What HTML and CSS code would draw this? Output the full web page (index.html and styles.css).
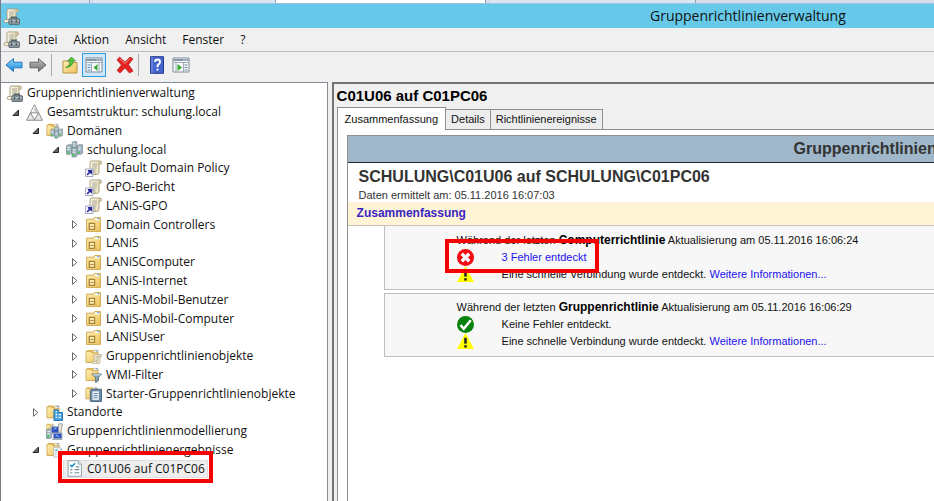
FILE: index.html
```
<!DOCTYPE html>
<html lang="de">
<head>
<meta charset="utf-8">
<title>Gruppenrichtlinienverwaltung</title>
<link rel="stylesheet" href="styles.css">
</head>
<body>
<svg class="defs" aria-hidden="true">
  <defs>
    <linearGradient id="g-blue" x1="0" y1="0" x2="0" y2="1"><stop offset="0" stop-color="#8fdcff"/><stop offset="1" stop-color="#1787d8"/></linearGradient>
    <linearGradient id="g-grey" x1="0" y1="0" x2="0" y2="1"><stop offset="0" stop-color="#c2c2c2"/><stop offset="1" stop-color="#6c6c6c"/></linearGradient>
    <linearGradient id="g-gold" x1="0" y1="0" x2="1" y2="1"><stop offset="0" stop-color="#fff0b4"/><stop offset="1" stop-color="#edc159"/></linearGradient>
    <linearGradient id="g-paper" x1="0" y1="0" x2="1" y2="0"><stop offset="0" stop-color="#fffdf0"/><stop offset="1" stop-color="#e6dcb8"/></linearGradient>
    <symbol id="paper" viewBox="0 0 16 16">
      <path d="M5 1h9q1.500 0 1.500 1.700T14 4.300h-1V12q0 2.500-2 2.500H2.500Q1 14.500 1 13t2-1.500h1V3q0-2 1-2z" fill="url(#g-paper)" stroke="#a79b78" stroke-width=".9"/>
      <path d="M13 4.300V2.500q0-1 1-1M3 11.700h6q-.8 1.500.8 2.500" fill="none" stroke="#a79b78" stroke-width=".8"/>
      <path d="M6 4h5M6 6h5M6 8h4.500M6 10h4" stroke="#999586" stroke-width=".8"/>
    </symbol>
    <symbol id="console" viewBox="0 0 16 16">
      <use href="#paper" width="15" height="15"/>
      <path d="M8 10V8.700h4.500V10" fill="none" stroke="#53616b" stroke-width="1.200"/>
      <rect x="5.500" y="10" width="10" height="5.500" rx=".7" fill="#86939b" stroke="#58646b" stroke-width=".8"/>
      <path d="M6 12h9" stroke="#c4ced4"/><path d="M8 11.500v2M12.500 11.500v2" stroke="#36434b" stroke-width="1.200"/>
    </symbol>
    <symbol id="folder" viewBox="0 0 16 16">
      <path d="M2 1.500h6L9.500 3H14v12H2z" fill="#e5b956"/>
      <path d="M9 2h5v3H9z" fill="#fff" stroke="#b59a55" stroke-width=".6"/><path d="M11.500 2.700h2" stroke="#3a91d8"/>
      <path d="M1 3h5l2 1.500h6V15H1z" fill="url(#g-gold)" stroke="#c59e49" stroke-width=".8"/>
    </symbol>
    <symbol id="ou" viewBox="0 0 16 16">
      <path d="M1.500 3h6L9 1.500h5.500v13h-13z" fill="url(#g-gold)" stroke="#d0a54c" stroke-width=".9"/>
      <path d="M9.500 2h4v2h-4z" fill="#fff"/><path d="M11.500 2.500h2" stroke="#3f9ee0"/>
      <path d="M4 7h5v5.500H4z" fill="#fff1b4" stroke="#a5823a" stroke-width="1.200"/><path d="M5 9.800h3" stroke="#a5823a"/>
    </symbol>
    <symbol id="server" viewBox="0 0 6 10">
      <path d="M.5 1.500L2 .5h3.500v8L4 9.500H.5z" fill="#a3b5bf" stroke="#637b86" stroke-width=".6"/>
      <path d="M1.200 3h2.600M1.200 5h2.600" stroke="#eef6fa" stroke-width=".8"/><path d="M1.200 7.700h1.800" stroke="#39cb3f" stroke-width="1.800"/>
    </symbol>
    <symbol id="servers" viewBox="0 0 16 16">
      <use href="#server" x="5" y="0" width="6" height="9"/><use href="#server" x="0" y="2" width="6" height="12"/><use href="#server" x="10" y="2" width="6" height="12"/><use href="#server" x="5" y="5" width="6" height="11"/>
    </symbol>
    <symbol id="domains" viewBox="0 0 16 16"><use href="#folder" width="13" height="14"/><use href="#servers" x="4" y="4" width="12" height="12"/></symbol>
    <symbol id="forest" viewBox="0 0 16 16">
      <path d="M8 .7L15.500 15.300H.5z" fill="#e6e6e6" stroke="#858585" stroke-width=".9"/>
      <path d="M8 1.500L11.500 8.500h-7z" fill="#f4f4f4"/><path d="M8 1.500L11.500 8.500 8 7z" fill="#c4c4c4"/>
      <path d="M4.300 8.300h7.400L8 15z" fill="#fff" stroke="#777" stroke-width=".8"/>
    </symbol>
    <symbol id="link" viewBox="0 0 16 16">
      <use href="#paper" x="1" width="15" height="15"/>
      <path d="M.5 8.500h7v7h-7z" fill="#fff" stroke="#9297b8" stroke-width=".8"/>
      <path d="M2 14l3.200-3.200M2.700 10.200H6v3.300" fill="none" stroke="#29299b" stroke-width="1.500"/>
    </symbol>
    <symbol id="gpos" viewBox="0 0 16 16"><use href="#folder" width="14" height="15"/><use href="#paper" x="6" y="5" width="10" height="11"/></symbol>
    <symbol id="wmi" viewBox="0 0 16 16"><use href="#folder" width="14" height="15"/><path d="M6.500 7.500h9L12.500 11v3L10 15.500V11z" fill="#8fa5b5" stroke="#4e6576" stroke-width=".8"/><path d="M7.500 8.300h7" stroke="#deebf5"/></symbol>
    <symbol id="starter" viewBox="0 0 16 16"><use href="#folder" width="13" height="15"/><path d="M6 4h9.500v11.500H5V5z" fill="#6e8aa5" stroke="#405d7b" stroke-width=".8"/><path d="M7 6h6v8H7z" fill="#f2f7fc"/><path d="M8 8h4M8 10h4M8 12h4" stroke="#537cae" stroke-width=".9"/></symbol>
    <symbol id="sites" viewBox="0 0 16 16"><use href="#folder" width="14" height="14"/><path d="M7.500 5.500h4V8h4v7.500h-8z" fill="#46a4e2" stroke="#1763a5" stroke-width=".8"/><path d="M9 7.500h1.500M9 10h1.500M12 10h2M9 12.500h1.500M12 12.500h2" stroke="#fff" stroke-width="1.200"/></symbol>
    <symbol id="model" viewBox="0 0 16 16">
      <use href="#folder" y="0" width="8" height="8"/><use href="#server" x="0" y="5" width="6" height="10"/><path d="M5 3.500h7v6H5zM7 9.500h8v5H7z" fill="#304fc0" stroke="#9aa9c4"/><path d="M7 6l3-1.500M9 11l3 2" stroke="#8dc5ff"/><path d="M12 .8h3.500L14 9l-2-1z" fill="url(#g-paper)" stroke="#86898a" stroke-width=".7"/><path d="M6 15.300h9" stroke="#829099"/>
    </symbol>
    <symbol id="report" viewBox="0 0 16 16">
      <path d="M2 .7h9.500L14.500 4v11.300H2z" fill="#fff" stroke="#8d9da8" stroke-width=".9"/><path d="M11.500 1v3h3" fill="#d8e1e7" stroke="#8d9da8" stroke-width=".7"/>
      <path d="M4 4.500l1.500 1.700L8.500 3" fill="none" stroke="#178fd1" stroke-width="1.500"/><path d="M4 9h2M4 12h2M8 9h4.500M8 12h4.500M9.500 6.500h3" stroke="#71899a" stroke-width="1.100"/>
    </symbol>
    <symbol id="results" viewBox="0 0 16 16"><use href="#folder" width="14" height="15"/><use href="#report" x="6" y="5" width="10" height="11"/></symbol>
    <symbol id="open" viewBox="0 0 9 9"><path d="M7.500 2v5.500H2z" fill="#666" stroke="#262626"/></symbol>
    <symbol id="closed" viewBox="0 0 9 9"><path d="M2.500.7v7.600L6.800 4.500z" fill="#fff" stroke="#666"/></symbol>
    <symbol id="warn" viewBox="0 0 16 16"><path d="M8 0L16 15H0z" fill="#ff0"/><path d="M8 4.500v5.500" stroke="#222" stroke-width="2.400"/><path d="M8 11.500v2.200" stroke="#222" stroke-width="2.400"/></symbol>
    <symbol id="error" viewBox="0 0 16 16"><circle cx="8" cy="8" r="8" fill="#f10b13"/><path d="M4.500 4.500l7 7M11.500 4.500l-7 7" stroke="#fff" stroke-width="3.200"/></symbol>
    <symbol id="ok" viewBox="0 0 16 16"><circle cx="8" cy="8" r="8" fill="#08820b"/><path d="M3.300 8.500l3 3.500 6.700-8" fill="none" stroke="#fff" stroke-width="2.400"/></symbol>
  </defs>
</svg>

<div class="backdrop"><span></span><span></span><span></span><span></span></div>
<header class="titlebar">
  <svg class="app-icon"><use href="#console"/></svg>
  <h1>Gruppenrichtlinienverwaltung</h1>
</header>
<nav class="menubar">
  <svg class="app-icon"><use href="#console"/></svg>
  <button>Datei</button><button>Aktion</button><button>Ansicht</button><button>Fenster</button><button>?</button>
</nav>
<div class="toolbar" role="toolbar">
  <button aria-label="Zurück"><svg viewBox="0 0 18 18"><path d="M1 9l7.500-6.500v3.700H17v5.600H8.500v3.700z" fill="url(#g-blue)" stroke="#2878b5"/></svg></button>
  <button aria-label="Vorwärts"><svg viewBox="0 0 18 18"><path d="M17 9L9.500 2.500v3.700H1v5.600h8.500v3.700z" fill="url(#g-grey)" stroke="#666"/></svg></button>
  <i></i>
  <button aria-label="Eine Ebene nach oben"><svg viewBox="0 0 18 18"><path d="M2 5h5l1.500 1.500H16V17H2z" fill="url(#g-gold)" stroke="#b79646"/><path d="M4.500 11.500Q9 10 9 5H6.500l4-4 4 4H12q0 6-7.500 6.500z" fill="#54c938" stroke="#31872b" stroke-width=".7"/></svg></button>
  <button class="pressed" aria-label="Konsolenstruktur anzeigen"><svg viewBox="0 0 18 18"><path d="M1 2h16v14H1z" fill="#f7f9fb" stroke="#7d8b98"/><path d="M1.500 3h15v2h-15z" fill="#8697a6"/><path d="M11.500 4h1M14 4h1" stroke="#fff"/><path d="M1.500 6.500h15M6.500 7v9M14 7v9" stroke="#9caab5"/><path d="M2.500 9h3M2.500 11.500h3M2.500 14h3" stroke="#4788c5" stroke-width="1.200"/><path d="M12.500 8v7l-4-3.500z" fill="#35aa34"/></svg></button>
  <button aria-label="Löschen"><svg viewBox="0 0 18 18"><path d="M3.500 1L9 6l5-5 3 2-4.500 5.500L17 15l-3.500 2L9 12l-5 5-3-2.500L5.500 9 1 4z" fill="#e52422" stroke="#ac1517" stroke-width=".7"/><path d="M3.500 2.500L9 7.500l5-5" fill="none" stroke="#ff8880"/></svg></button>
  <i></i>
  <button aria-label="Hilfe"><svg viewBox="0 0 18 18"><path d="M2.500.7h13v16.600h-13z" fill="#4664cd" stroke="#233b91"/><path d="M4 1v16" stroke="#829af0"/><path d="M7 6q0-2.500 2.500-2.500T12 6q0 1.300-1.300 2.100T9.500 10.500v.8M9.500 12.800v1.800" fill="none" stroke="#fff" stroke-width="1.900"/></svg></button>
  <button aria-label="Aktionsbereich anzeigen"><svg viewBox="0 0 18 18"><path d="M1 2h16v14H1z" fill="#f7f9fb" stroke="#7d8b98"/><path d="M1.500 3h15v2h-15z" fill="#8697a6"/><path d="M11.500 4h1M14 4h1" stroke="#fff"/><path d="M1.500 6.500h15M4 7v9M11.500 7v9" stroke="#9caab5"/><path d="M12.500 9h3M12.500 11.500h3M12.500 14h3" stroke="#647d95" stroke-width="1.200"/><path d="M5.500 8v7l4.500-3.500z" fill="#35aa34"/></svg></button>
</div>

<main class="workspace">
  <aside class="tree-pane">
    <ul class="tree">
      <li class="root"><svg><use href="#console"/></svg><span>Gruppenrichtlinienverwaltung</span></li>
      <li class="l1"><button aria-label="Zuklappen"><svg><use href="#open"/></svg></button><svg><use href="#forest"/></svg><span>Gesamtstruktur: schulung.local</span></li>
      <li class="l2"><button aria-label="Zuklappen"><svg><use href="#open"/></svg></button><svg><use href="#domains"/></svg><span>Domänen</span></li>
      <li class="l3"><button aria-label="Zuklappen"><svg><use href="#open"/></svg></button><svg><use href="#servers"/></svg><span>schulung.local</span></li>
      <li class="l4 leaf"><svg><use href="#link"/></svg><span>Default Domain Policy</span></li>
      <li class="l4 leaf"><svg><use href="#link"/></svg><span>GPO-Bericht</span></li>
      <li class="l4 leaf"><svg><use href="#link"/></svg><span>LANiS-GPO</span></li>
      <li class="l4"><button aria-label="Aufklappen"><svg><use href="#closed"/></svg></button><svg><use href="#ou"/></svg><span>Domain Controllers</span></li>
      <li class="l4"><button aria-label="Aufklappen"><svg><use href="#closed"/></svg></button><svg><use href="#ou"/></svg><span>LANiS</span></li>
      <li class="l4"><button aria-label="Aufklappen"><svg><use href="#closed"/></svg></button><svg><use href="#ou"/></svg><span>LANiSComputer</span></li>
      <li class="l4"><button aria-label="Aufklappen"><svg><use href="#closed"/></svg></button><svg><use href="#ou"/></svg><span>LANiS-Internet</span></li>
      <li class="l4"><button aria-label="Aufklappen"><svg><use href="#closed"/></svg></button><svg><use href="#ou"/></svg><span>LANiS-Mobil-Benutzer</span></li>
      <li class="l4"><button aria-label="Aufklappen"><svg><use href="#closed"/></svg></button><svg><use href="#ou"/></svg><span>LANiS-Mobil-Computer</span></li>
      <li class="l4"><button aria-label="Aufklappen"><svg><use href="#closed"/></svg></button><svg><use href="#ou"/></svg><span>LANiSUser</span></li>
      <li class="l4"><button aria-label="Aufklappen"><svg><use href="#closed"/></svg></button><svg><use href="#gpos"/></svg><span>Gruppenrichtlinienobjekte</span></li>
      <li class="l4"><button aria-label="Aufklappen"><svg><use href="#closed"/></svg></button><svg><use href="#wmi"/></svg><span>WMI-Filter</span></li>
      <li class="l4"><button aria-label="Aufklappen"><svg><use href="#closed"/></svg></button><svg><use href="#starter"/></svg><span>Starter-Gruppenrichtlinienobjekte</span></li>
      <li class="l2"><button aria-label="Aufklappen"><svg><use href="#closed"/></svg></button><svg><use href="#sites"/></svg><span>Standorte</span></li>
      <li class="l2 leaf"><svg><use href="#model"/></svg><span>Gruppenrichtlinienmodellierung</span></li>
      <li class="l2"><button aria-label="Zuklappen"><svg><use href="#open"/></svg></button><svg><use href="#results"/></svg><span>Gruppenrichtlinienergebnisse</span></li>
      <li class="l3 leaf"><div class="selected"><svg><use href="#report"/></svg><span>C01U06 auf C01PC06</span><b class="marker"></b></div></li>
    </ul>
  </aside>
  <section class="detail-pane">
    <h2>C01U06 auf C01PC06</h2>
    <div class="tabs" role="tablist">
      <button class="active" role="tab" aria-selected="true">Zusammenfassung</button><button role="tab">Details</button><button role="tab">Richtlinienereignisse</button>
    </div>
    <div class="tab-page">
      <article class="report">
        <div class="banner">Gruppenrichtlinien</div>
        <div class="subject">
          <h3>SCHULUNG\C01U06 auf SCHULUNG\C01PC06</h3>
          <p>Daten ermittelt am: 05.11.2016 16:07:03</p>
        </div>
        <h4>Zusammenfassung</h4>
        <section class="event">
          <p>Während der letzten <strong>Computerrichtlinie</strong> Aktualisierung am 05.11.2016 16:06:24</p>
          <div class="status"><svg><use href="#error"/></svg><a href="#fehler">3 Fehler entdeckt</a><b class="marker"></b></div>
          <div class="status"><svg><use href="#warn"/></svg><span>Eine schnelle Verbindung wurde entdeckt. <a href="#info">Weitere Informationen...</a></span></div>
        </section>
        <section class="event">
          <p>Während der letzten <strong>Gruppenrichtlinie</strong> Aktualisierung am 05.11.2016 16:06:29</p>
          <div class="status"><svg><use href="#ok"/></svg><span>Keine Fehler entdeckt.</span></div>
          <div class="status"><svg><use href="#warn"/></svg><span>Eine schnelle Verbindung wurde entdeckt. <a href="#info">Weitere Informationen...</a></span></div>
        </section>
      </article>
    </div>
  </section>
</main>
</body>
</html>
```
FILE: styles.css
```
* { box-sizing: border-box; }
html, body { height: 100%; }
body {
  margin: 0;
  display: flex;
  flex-direction: column;
  overflow: hidden;
  background: #f0f0f0;
  color: #111;
  font: 12px/18px "Open Sans", "Noto Sans", sans-serif;
  border-left: 1px solid #777c85;
}
h1, h2, h3, h4, p, ul { margin: 0; padding: 0; font-weight: normal; }
button { margin: 0; padding: 0; border: 0; background: none; color: inherit; font: inherit; }
svg { flex: none; display: block; }
.defs { position: absolute; width: 0; height: 0; }

.backdrop { display: flex; flex: none; height: 4px; background: #d5dced; border-bottom: 1px solid #9bc4e0; }
.backdrop span { border-right: 1px solid #8fa0bf; background: #dce5f4; }
.backdrop span:nth-child(1) { width: 89px; }
.backdrop span:nth-child(2) { width: 182px; margin-left: 4px; }
.backdrop span:nth-child(3) { width: 210px; background: #fff; }
.backdrop span:nth-child(4) { width: 206px; margin-left: 4px; }

.app-icon { width: 17px; height: 17px; }
.titlebar { display: flex; flex: none; align-items: center; height: 24px; padding-left: 2px; background: #66c9ea; }
.titlebar h1 { margin-left: 630px; font-size: 14px; line-height: 20px; white-space: nowrap; }
.menubar { display: flex; flex: none; align-items: center; gap: 16px; height: 24px; padding-left: 2px; border-bottom: 1px solid #b8bec4; }
.menubar .app-icon { margin-right: -8px; }
.toolbar { display: flex; flex: none; align-items: center; height: 30px; padding: 0 0 4px 1px; }
.toolbar button { display: grid; place-items: center; width: 24px; height: 24px; }
.toolbar svg { width: 18px; height: 18px; }
.toolbar i { width: 1px; height: 22px; margin: 0 6px 0 1px; background: #aaa; }
.toolbar .pressed { border: 1px solid #2f9bdf; background: #cde8fa; margin-right: 7px; }

.workspace { display: flex; flex: 1; min-height: 0; gap: 4px; }
.tree-pane { flex: 0 0 35%; display: flex; flex-direction: column; background: #fff; border: 1px solid #858b94; border-bottom: 0; border-left: 0; padding-top: 1px; }
.tree { display: grid; grid-template-rows: repeat(21, 1fr); flex: 0 1 394px; list-style: none; white-space: nowrap; }
.tree li { display: flex; align-items: center; min-height: 0; }
.tree svg { width: 17px; height: 17px; margin-right: 4px; }
.tree button { width: 9px; margin-right: 6px; }
.tree button svg { width: 9px; height: 9px; margin: 0; }
.root { padding-left: 5px; }
.l1 { padding-left: 10px; }
.l2 { padding-left: 30px; }
.l3 { padding-left: 50px; }
.l4 { padding-left: 69px; }
.l2.leaf { padding-left: 45px; }
.l3.leaf { padding-left: 62px; }
.l4.leaf { padding-left: 84px; }
.selected { position: relative; display: flex; align-items: center; height: 18px; padding: 0 2px; background: #ededed; border: 1px solid #dedede; }
.marker { position: absolute; z-index: 2; border: 4px solid #f80000; pointer-events: none; }
.selected .marker { inset: -10px -6px -6px; }

.detail-pane { flex: 1; min-width: 0; display: flex; flex-direction: column; overflow: hidden; padding-left: 3px; border: solid #747474; border-width: 2px 0 0 2px; font-family: "Liberation Sans", Arial, sans-serif; font-size: 11px; white-space: nowrap; }
.detail-pane h2 { font-size: 15px; line-height: 23px; font-weight: bold; color: #000; }
.tabs { display: flex; align-items: flex-end; height: 22px; }
.tabs button { height: 20px; padding: 0 5px; border: 1px solid #8b8f96; border-left-width: 0; border-bottom: 0; line-height: 19px; background: #ededed; }
.tabs .active { height: 23px; margin-bottom: -1px; padding: 0 7px; border-left-width: 1px; background: #fff; z-index: 1; }
.tab-page { flex: 1; padding: 5px 0 0 9px; border: solid #8b8f96; border-width: 1px 0 0 1px; background: #fff; }
.report { height: 100%; border: solid #8f8f8f; border-width: 1px 0 0 1px; }
.banner { padding-left: 446px; height: 27px; line-height: 26px; font-size: 16px; font-weight: bold; background: #9fb7c9; color: #333; border-bottom: 1px solid #222b33; }
.subject { padding: 4px 0 0 11px; height: 39px; color: #333; }
.subject h3 { font-size: 16px; line-height: 19px; font-weight: bold; }
.report h4 { height: 24px; padding-left: 9px; line-height: 23px; font-size: 12px; font-weight: bold; color: #3a26c4; background: #fff4d5; border-bottom: 1px solid #c9c5ba; }
.event { margin: 0 0 3px 36px; padding: 5px 0 6px 72px; border: 1px solid #bfbfbf; border-right: 0; background: #f7f7f7; line-height: 17px; }
.report h4 + .event { padding-top: 6px; border-top: 0; }
.status { position: relative; display: flex; align-items: center; height: 17px; }
.status svg { width: 17px; height: 17px; margin-right: 28px; }
.status .marker { width: 154px; height: 34px; left: -12px; top: -10px; }
.event strong { color: #000; font-size: 12px; }
.event a { color: #1c12ee; text-decoration: none; }
```
